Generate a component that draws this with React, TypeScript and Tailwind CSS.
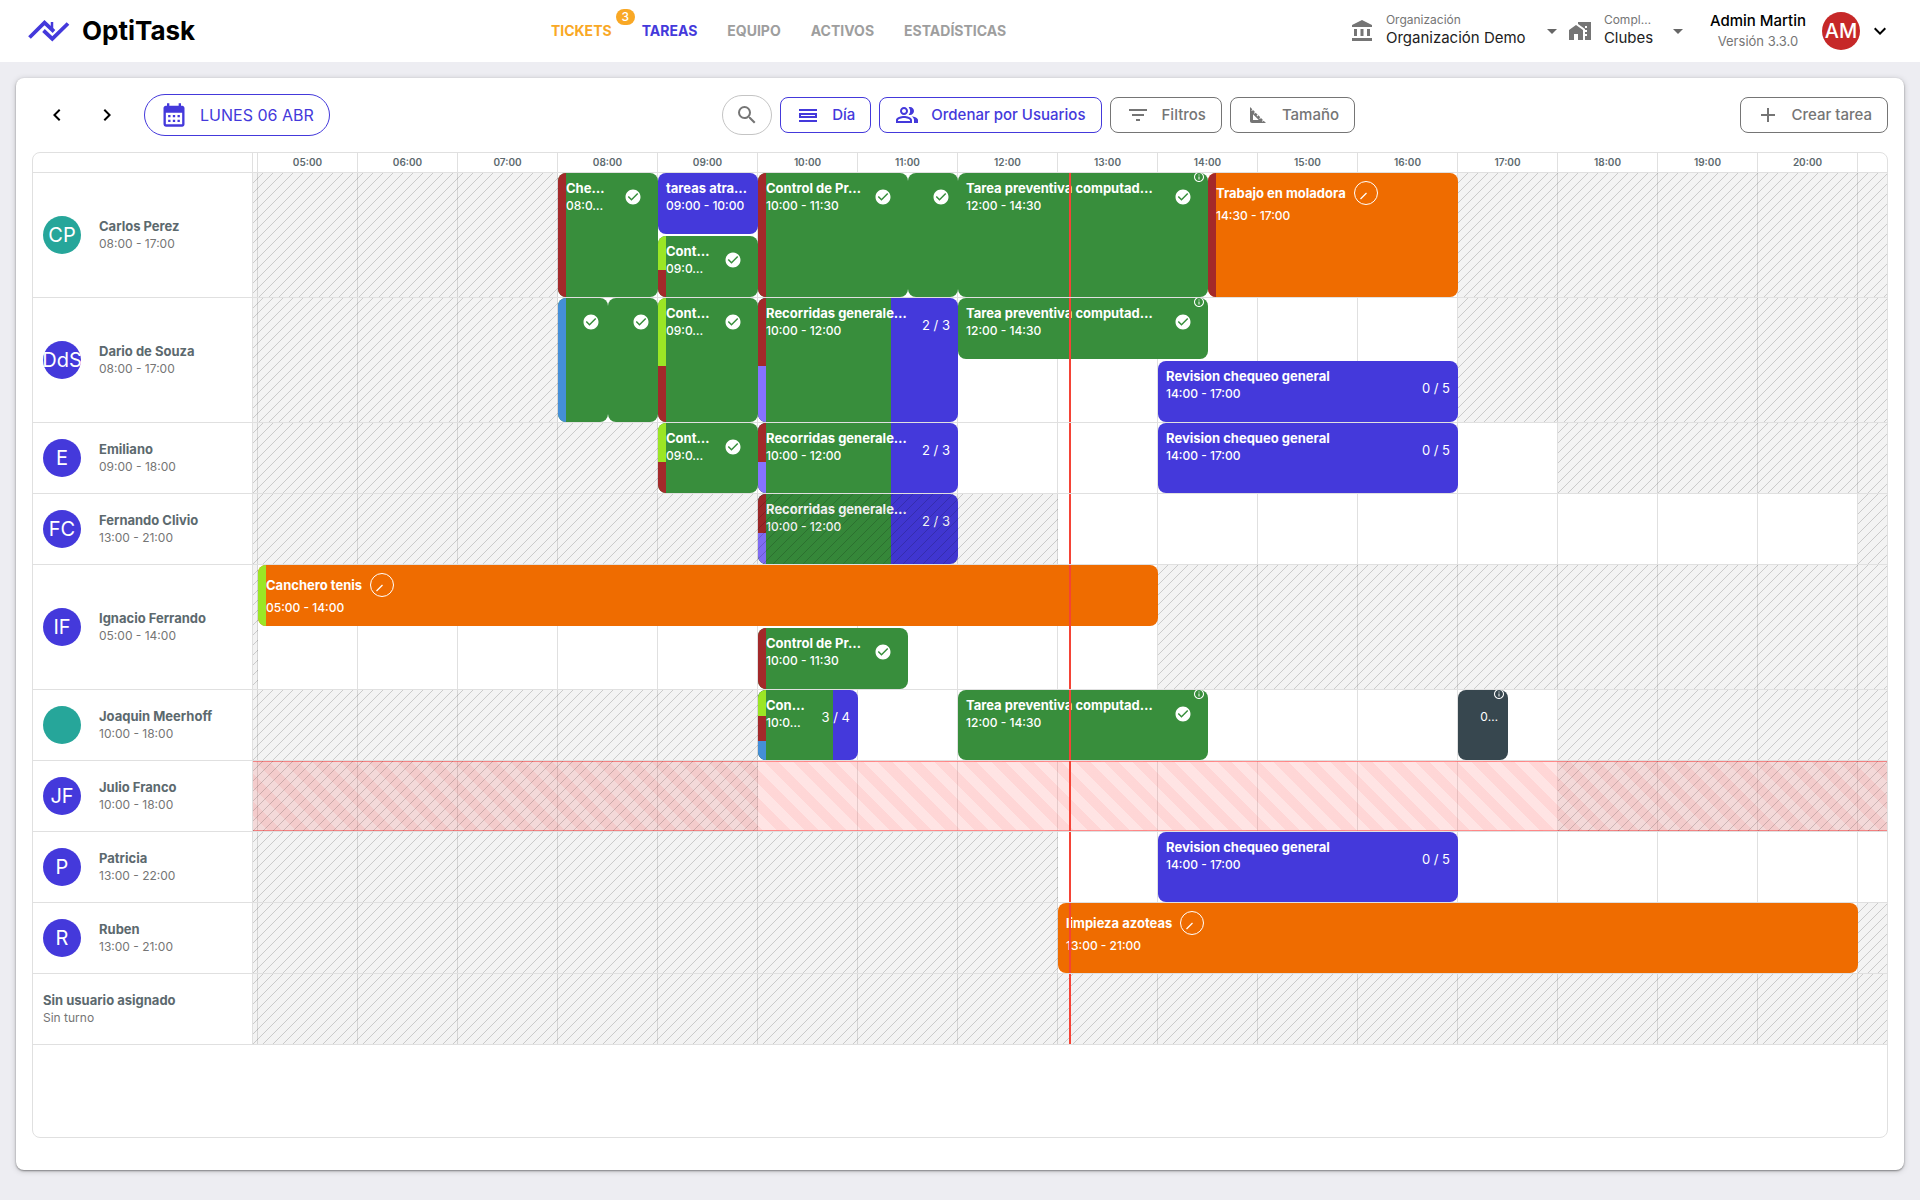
import type { ReactNode } from 'react';
import {
    MdAccountBalance,
    MdAdd,
    MdArrowDropDown,
    MdCalendarMonth,
    MdCheckCircle,
    MdChevronLeft,
    MdChevronRight,
    MdExpandMore,
    MdFilterList,
    MdHomeWork,
    MdInfoOutline,
    MdOutlinePeopleAlt,
    MdSearch,
    MdSquareFoot,
} from 'react-icons/md';

const FIRST_HOUR = 5;
const HOUR_WIDTH = 100;
const LEAD_WIDTH = 5;
const NOW = 13.12;
const HOURS = Array.from({ length: 16 }, (_, i) => FIRST_HOUR + i);

const hourToX = (hour: number) => LEAD_WIDTH + (hour - FIRST_HOUR) * HOUR_WIDTH;

type Tag = { color: string; share: number };

interface Task {
    start: number;
    end: number;
    title?: string;
    time?: string;
    color: string;
    lane?: number; // without a lane the task fills the whole row
    tags?: Tag[];
    done?: boolean;
    info?: boolean;
    running?: boolean;
    count?: string;
    progress?: number;
}

interface UserRow {
    name: string;
    shift: string;
    initials?: string;
    avatar?: string;
    from: number;
    to: number;
    lanes?: number;
    absent?: boolean;
    tasks: Task[];
}

const GREEN = 'bg-[#388e3c]';
const BLUE = 'bg-[#4439db]';
const ORANGE = 'bg-[#ef6c00]';
const SLATE = 'bg-[#37474f]';
const TEAL = 'bg-[#26a69a]';

const RED_TAG: Tag[] = [{ color: 'bg-[#a3292a]', share: 100 }];
const LIME_RED: Tag[] = [
    { color: 'bg-[#9be625]', share: 55 },
    { color: 'bg-[#a3292a]', share: 45 },
];
const RED_VIOLET: Tag[] = [
    { color: 'bg-[#a3292a]', share: 55 },
    { color: 'bg-[#8672ff]', share: 45 },
];

const preventiva: Task = {
    start: 12, end: 14.5, title: 'Tarea preventiva computad…', time: '12:00 - 14:30', color: GREEN, done: true, info: true,
};
const recorridas: Task = {
    start: 10, end: 12, title: 'Recorridas generale…', time: '10:00 - 12:00', color: BLUE, tags: RED_VIOLET, count: '2 / 3', progress: 66.7,
};
const revision: Task = {
    start: 14, end: 17, title: 'Revision chequeo general', time: '14:00 - 17:00', color: BLUE, count: '0 / 5',
};
const control: Task = {
    start: 9, end: 10, title: 'Cont…', time: '09:0…', color: GREEN, tags: LIME_RED, done: true,
};

const ROWS: UserRow[] = [
    {
        name: 'Carlos Perez', shift: '08:00 - 17:00', initials: 'CP', avatar: TEAL, from: 8, to: 17, lanes: 2,
        tasks: [
            { start: 8, end: 9, title: 'Che…', time: '08:0…', color: GREEN, tags: RED_TAG, done: true },
            { start: 9, end: 10, title: 'tareas atra…', time: '09:00 - 10:00', color: BLUE, lane: 1 },
            { ...control, lane: 2 },
            { start: 10, end: 11.5, title: 'Control de Pr…', time: '10:00 - 11:30', color: GREEN, tags: RED_TAG, done: true },
            { start: 11.5, end: 12, color: GREEN, done: true },
            preventiva,
            { start: 14.5, end: 17, title: 'Trabajo en moladora', time: '14:30 - 17:00', color: ORANGE, tags: RED_TAG, running: true },
        ],
    },
    {
        name: 'Dario de Souza', shift: '08:00 - 17:00', initials: 'DdS', avatar: BLUE, from: 8, to: 17, lanes: 2,
        tasks: [
            { start: 8, end: 8.5, color: GREEN, tags: [{ color: 'bg-[#448fd8]', share: 100 }], done: true },
            { start: 8.5, end: 9, color: GREEN, done: true },
            control,
            recorridas,
            { ...preventiva, lane: 1 },
            { ...revision, lane: 2 },
        ],
    },
    {
        name: 'Emiliano', shift: '09:00 - 18:00', initials: 'E', avatar: BLUE, from: 9, to: 18,
        tasks: [control, recorridas, revision],
    },
    {
        name: 'Fernando Clivio', shift: '13:00 - 21:00', initials: 'FC', avatar: BLUE, from: 13, to: 21,
        tasks: [recorridas],
    },
    {
        name: 'Ignacio Ferrando', shift: '05:00 - 14:00', initials: 'IF', avatar: BLUE, from: 5, to: 14, lanes: 2,
        tasks: [
            { start: 5, end: 14, title: 'Canchero tenis', time: '05:00 - 14:00', color: ORANGE, lane: 1, tags: [{ color: 'bg-[#9be625]', share: 100 }], running: true },
            { start: 10, end: 11.5, title: 'Control de Pr…', time: '10:00 - 11:30', color: GREEN, lane: 2, tags: RED_TAG, done: true },
        ],
    },
    {
        name: 'Joaquin Meerhoff', shift: '10:00 - 18:00', initials: '', avatar: TEAL, from: 10, to: 18,
        tasks: [
            {
                start: 10, end: 11, title: 'Con…', time: '10:0…', color: BLUE, count: '3 / 4', progress: 75,
                tags: [
                    { color: 'bg-[#9be625]', share: 37 },
                    { color: 'bg-[#a3292a]', share: 36 },
                    { color: 'bg-[#448fd8]', share: 27 },
                ],
            },
            preventiva,
            { start: 17, end: 17.5, color: SLATE, count: '0…', info: true },
        ],
    },
    { name: 'Julio Franco', shift: '10:00 - 18:00', initials: 'JF', avatar: BLUE, from: 10, to: 18, absent: true, tasks: [] },
    { name: 'Patricia', shift: '13:00 - 22:00', initials: 'P', avatar: BLUE, from: 13, to: 22, tasks: [revision] },
    {
        name: 'Ruben', shift: '13:00 - 21:00', initials: 'R', avatar: BLUE, from: 13, to: 21,
        tasks: [{ start: 13, end: 21, title: 'limpieza azoteas', time: '13:00 - 21:00', color: ORANGE, running: true }],
    },
    { name: 'Sin usuario asignado', shift: 'Sin turno', from: 22, to: 22, tasks: [] },
];

function Logo() {
    return (
        <svg viewBox="0 0 42 24" className="h-6 w-[42px]" fill="none" stroke="#4439db" strokeWidth="3.8">
            <path d="M1.5 18.5 L16.5 3.7 L26 12.5" />
            <path d="M15.5 11.5 L24.3 19.8 L40 4.5" />
            <path d="M24 3 V10" strokeWidth="2.5" />
        </svg>
    );
}

function DayIcon() {
    return (
        <svg viewBox="0 0 24 24" className="size-6" fill="currentColor">
            <path d="M3 17h18v2H3zM19 12v1H5v-1h14m2-2H3v5h18v-5zM3 6h18v2H3z" />
        </svg>
    );
}

function RunningIcon() {
    return (
        <svg viewBox="0 0 24 24" className="size-6 shrink-0" fill="none" stroke="currentColor">
            <circle cx="12" cy="12" r="11.5" />
            <path d="M6.5 18 L12.5 12" strokeWidth="1.2" />
        </svg>
    );
}

function Picker({ id, label, value, icon, width }: { id: string; label: string; value: string; icon: ReactNode; width: string }) {
    return (
        <div className="flex items-center gap-3">
            {icon}
            <div className={`flex items-center ${width}`}>
                <div className="min-w-0 flex-1 pb-1">
                    <label htmlFor={id} className="block text-xs leading-[18px] text-[#757575]">{label}</label>
                    <select id={id} defaultValue={value} className="block h-[18px] w-full appearance-none bg-transparent text-[15px] leading-[18px] text-[#212121]">
                        <option>{value}</option>
                    </select>
                </div>
                <MdArrowDropDown size={24} className="text-[#666]" />
            </div>
        </div>
    );
}

function ToolButton({ icon, children, active }: { icon: ReactNode; children: ReactNode; active?: boolean }) {
    return (
        <button
            className={`flex h-9 items-center gap-3 rounded-lg border px-[15px] text-[15px] font-medium ${
                active ? 'border-[#4439db] text-[#4439db]' : 'border-[#757575] text-[#757575]'
            }`}
        >
            {icon}
            {children}
        </button>
    );
}

function Header() {
    return (
        <header className="flex h-[62px] items-center justify-between bg-white px-7">
            <div className="flex items-center gap-3">
                <Logo />
                <span className="text-[26px] leading-8 font-bold text-black">OptiTask</span>
            </div>

            <nav className="ml-3 flex items-center gap-[30px] text-sm font-bold text-[#9e9e9e]">
                <a href="#tickets" className="relative text-[#f9a825]">
                    TICKETS
                    <span className="absolute -top-3 left-full ml-1 flex h-4 w-[19px] items-center justify-center rounded-full bg-[#f9a825] text-xs font-medium text-white">3</span>
                </a>
                <a href="#tareas" className="text-[#4439db]">TAREAS</a>
                <a href="#equipo">EQUIPO</a>
                <a href="#activos">ACTIVOS</a>
                <a href="#estadisticas">ESTADÍSTICAS</a>
            </nav>

            <div className="flex items-center">
                <Picker id="org" label="Organización" value="Organización Demo" width="w-[178px]" icon={<MdAccountBalance size={24} className="text-[#757575]" />} />
                <div className="ml-1">
                    <Picker id="complex" label="Compl…" value="Clubes" width="w-[86px]" icon={<MdHomeWork size={24} className="text-[#757575]" />} />
                </div>
                <div className="ml-5 text-center">
                    <div className="text-[15px] leading-5 font-medium text-black">Admin Martin</div>
                    <div className="text-[13px] leading-5 text-[#757575]">Versión 3.3.0</div>
                </div>
                <button className="ml-4 flex items-center gap-2" aria-label="Cuenta">
                    <span className="flex size-[38px] items-center justify-center rounded-full bg-[#c62828] text-xl font-medium text-white">AM</span>
                    <MdExpandMore size={24} className="text-black" />
                </button>
            </div>
        </header>
    );
}

function Toolbar() {
    return (
        <div className="flex h-[42px] items-center justify-between">
            <div className="flex items-center">
                <button aria-label="Día anterior" className="flex w-[50px] justify-center"><MdChevronLeft size={24} /></button>
                <button aria-label="Día siguiente" className="flex w-[50px] justify-center"><MdChevronRight size={24} /></button>
                <button className="ml-3 flex h-[42px] items-center gap-3 rounded-full border border-[#4439db] px-[15px] text-base text-[#4439db]">
                    <MdCalendarMonth size={28} />
                    LUNES 06 ABR
                </button>
            </div>

            <div className="ml-2 flex items-center gap-2">
                <button aria-label="Buscar" className="flex h-10 w-[50px] items-center justify-center rounded-full border border-[#c4c4c4] text-[#757575]">
                    <MdSearch size={24} />
                </button>
                <ToolButton active icon={<DayIcon />}>Día</ToolButton>
                <ToolButton active icon={<MdOutlinePeopleAlt size={24} />}>Ordenar por Usuarios</ToolButton>
                <ToolButton icon={<MdFilterList size={24} />}>Filtros</ToolButton>
                <ToolButton icon={<MdSquareFoot size={24} />}>Tamaño</ToolButton>
            </div>

            <ToolButton icon={<MdAdd size={24} />}>Crear tarea</ToolButton>
        </div>
    );
}

function TaskCard({ task }: { task: Task }) {
    const slot = (task.start - FIRST_HOUR) * 2 + 1;
    const slots = (task.end - task.start) * 2;
    const narrow = slots === 1;

    return (
        <article
            className={`relative flex min-w-0 overflow-hidden rounded-lg text-xs leading-[18px] text-white ${task.color}`}
            style={{ gridColumn: `${slot} / span ${slots}`, gridRow: task.lane ?? '1 / -1' }}
        >
            {task.progress && <div className="absolute inset-y-0 left-0 bg-[#388e3c]" style={{ width: `${task.progress}%` }} />}
            <div className="relative flex w-2 shrink-0 flex-col">
                {task.tags?.map((tag, i) => (
                    <span key={i} className={tag.color} style={{ height: `${tag.share}%` }} />
                ))}
            </div>
            <div className={`relative min-w-0 flex-1 whitespace-nowrap ${task.running ? 'pt-2' : 'pt-[6px]'}`}>
                <div className="flex gap-2">
                    <h3 className={`text-[13px] font-bold ${task.running ? 'leading-6' : 'leading-[18px]'}`}>{task.title}</h3>
                    {task.running && <RunningIcon />}
                </div>
                <p className={task.running ? 'pt-[2px] font-medium' : 'font-medium'}>{task.time}</p>
            </div>
            {task.done && <MdCheckCircle size={18} className={`absolute top-[15px] ${narrow ? 'right-2' : 'right-4'}`} />}
            {task.count && <span className={`absolute top-[18px] ${narrow ? 'right-[10px]' : 'right-2 text-[13px]'}`}>{task.count}</span>}
            {task.info && <MdInfoOutline size={12} className="absolute -top-[2px] right-[3px]" />}
        </article>
    );
}

// Shift hours stay clear, everything outside of them is hatched over the tasks
function OffHours({ from, to }: { from: number; to: number }) {
    const hatch =
        'pointer-events-none absolute inset-y-0 bg-[#0000000c] bg-[linear-gradient(135deg,transparent_46%,#0000002b_46%,#0000002b_54%,transparent_54%)] bg-[size:10px_10px]';

    return (
        <>
            <div className={`${hatch} left-0`} style={{ width: hourToX(from) }} />
            <div className={`${hatch} right-0`} style={{ left: hourToX(to) }} />
        </>
    );
}

function TimelineRow({ row }: { row: UserRow }) {
    const laneRows = row.lanes === 2 ? 'grid-rows-[61px_61px]' : 'grid-rows-[70px]';

    return (
        <div className="flex border-b border-[#e0e0e0]">
            <div className="flex w-[220px] shrink-0 items-center border-r border-[#e0e0e0] pl-[10px]">
                {row.avatar && (
                    <div className={`mr-[18px] flex size-[38px] shrink-0 items-center justify-center rounded-full text-xl text-white ${row.avatar}`}>
                        {row.initials}
                    </div>
                )}
                <div className="text-xs leading-[18px] text-[#757575]">
                    <div className="text-[13px] leading-[18px] font-bold text-[#5c696e]">{row.name}</div>
                    <div>{row.shift}</div>
                </div>
            </div>

            <div className="relative min-w-0 flex-1 overflow-hidden">
                <div className="absolute inset-0 flex">
                    <div className="w-[5px] shrink-0 border-r border-[#e0e0e0]" />
                    {HOURS.map((hour) => (
                        <div key={hour} className="w-[100px] shrink-0 border-r border-[#e0e0e0]" />
                    ))}
                </div>
                <div className={`relative grid grid-cols-[repeat(32,50px)] gap-y-[2px] pl-[5px] ${laneRows}`}>
                    {row.tasks.map((task, i) => (
                        <TaskCard key={i} task={task} />
                    ))}
                </div>
                {row.absent && (
                    <div className="absolute inset-0 border-y border-[#ff525299] bg-[repeating-linear-gradient(45deg,#ff525228_0,#ff525228_10px,#ff52523c_10px,#ff52523c_20px)]" />
                )}
                <OffHours from={row.from} to={row.to} />
                <div className="absolute inset-y-0 w-[2px] bg-[#f44336]" style={{ left: hourToX(NOW) - 1 }} />
            </div>
        </div>
    );
}

function Timeline() {
    return (
        <section className="mt-4 flex-1 overflow-hidden rounded-lg border border-[#e0e0e0]">
            <div className="flex h-5 border-b border-[#e0e0e0] text-[10px] font-semibold text-[#5c696e]">
                <div className="w-[220px] shrink-0 border-r border-[#e0e0e0]" />
                <div className="flex min-w-0 flex-1 overflow-hidden">
                    <div className="w-[5px] shrink-0 border-r border-[#e0e0e0]" />
                    {HOURS.map((hour) => (
                        <div key={hour} className="flex w-[100px] shrink-0 items-center justify-center border-r border-[#e0e0e0]">
                            {String(hour).padStart(2, '0')}:00
                        </div>
                    ))}
                </div>
            </div>
            {ROWS.map((row) => (
                <TimelineRow key={row.name} row={row} />
            ))}
        </section>
    );
}

export default function App() {
    return (
        <div className="flex min-h-screen flex-col bg-[#ededf2] font-[Inter,sans-serif] text-black">
            <Header />
            <main className="flex flex-1 flex-col px-4 pt-4 pb-[30px]">
                <div className="flex flex-1 flex-col rounded-lg bg-white px-4 pt-4 pb-8 shadow-[0_1px_2px_#00000066,0_1px_6px_#0000002e]">
                    <Toolbar />
                    <Timeline />
                </div>
            </main>
        </div>
    );
}
